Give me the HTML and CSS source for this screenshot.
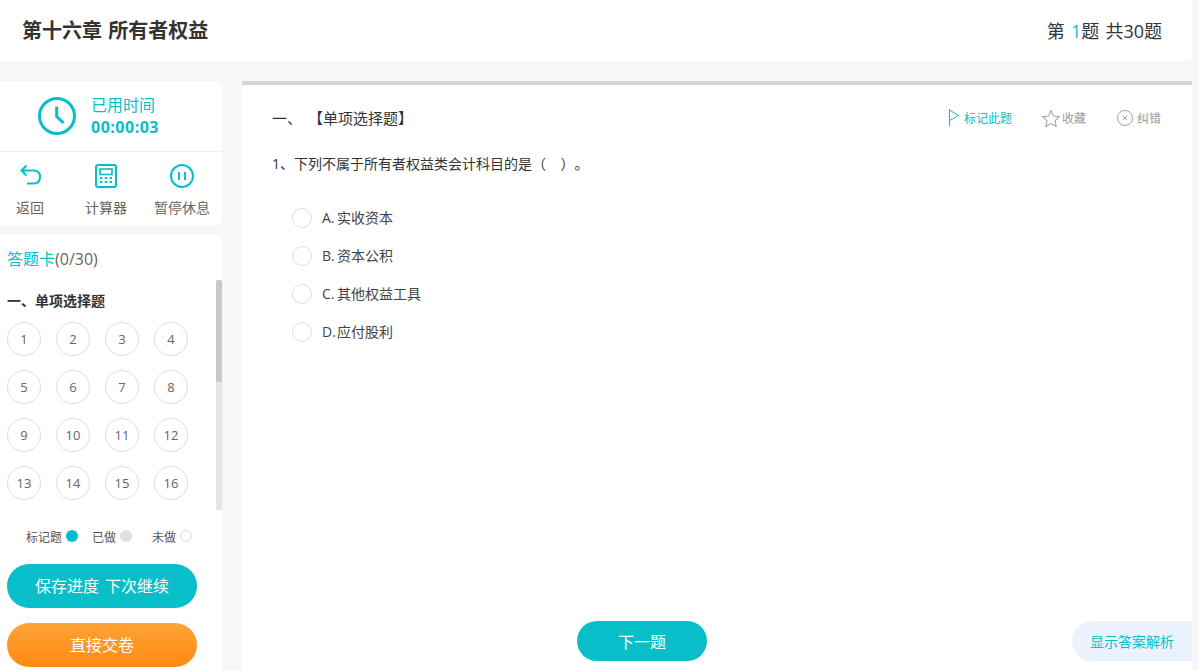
FILE: index.html
```html
<!DOCTYPE html>
<html lang="zh-CN">
<head>
<meta charset="utf-8">
<title>第十六章 所有者权益</title>
<link rel="stylesheet" href="styles.css">
</head>
<body>
<header class="topbar">
  <h1 class="chapter">第十六章 所有者权益</h1>
  <div class="progress">第 <span class="accent">1</span>题 共30题</div>
</header>
<div class="layout">
  <aside class="sidebar">
    <section class="card tools-card">
      <div class="timer">
        <svg class="clock" width="38" height="38" viewBox="0 0 38 38" fill="none"><circle cx="19" cy="19" r="17.5" stroke="#08bfc9" stroke-width="3"/><path d="M18.7 9.5V19.5L25.5 26" stroke="#08bfc9" stroke-width="3"/></svg>
        <div class="timer-text">
          <div class="timer-label">已用时间</div>
          <div class="timer-value">00:00:03</div>
        </div>
      </div>
      <div class="tools">
        <div class="tool tool-back">
          <svg width="24" height="24" viewBox="0 0 24 24" fill="none" stroke="#08bfc9" stroke-width="2"><path d="M7.5 1.5L2.5 6.5L7.5 11.5M2.5 6.5H14.5C18.5 6.5 21 9 21 13C21 17 18.5 19.5 14.5 19.5H8"/></svg>
          <span>返回</span>
        </div>
        <div class="tool tool-calc">
          <svg width="24" height="24" viewBox="0 0 24 24" fill="none"><rect x="2" y="1" width="20" height="22" rx="2" stroke="#08bfc9" stroke-width="2"/><rect x="6" y="5" width="12" height="5.5" stroke="#08bfc9" stroke-width="1.6"/><path d="M6 13h2.400v2H6zM10.800 13h2.400v2h-2.400zM15.600 13H18v2h-2.400zM6 17h2.400v2H6zM10.800 17h2.400v2h-2.400zM15.600 17H18v2h-2.400z" fill="#08bfc9"/></svg>
          <span>计算器</span>
        </div>
        <div class="tool tool-pause">
          <svg width="24" height="24" viewBox="0 0 24 24" fill="none" stroke="#08bfc9" stroke-width="2"><circle cx="12" cy="12" r="11"/><path d="M9 8V16M15 8V16"/></svg>
          <span>暂停休息</span>
        </div>
      </div>
    </section>
    <section class="card sheet">
      <div class="sheet-title"><span class="accent">答题卡</span>(0/30)</div>
      <div class="sheet-scroll">
        <div class="sheet-list">
          <h2 class="sheet-section">一、单项选择题</h2>
          <div class="numbers">
            <span class="num">1</span><span class="num">2</span><span class="num">3</span><span class="num">4</span>
            <span class="num">5</span><span class="num">6</span><span class="num">7</span><span class="num">8</span>
            <span class="num">9</span><span class="num">10</span><span class="num">11</span><span class="num">12</span>
            <span class="num">13</span><span class="num">14</span><span class="num">15</span><span class="num">16</span>
          </div>
        </div>
        <div class="scroll-track"><div class="scroll-thumb"></div></div>
      </div>
      <div class="legend">
        <span class="legend-item legend-mark">标记题<i class="dot dot-mark"></i></span>
        <span class="legend-item legend-done">已做<i class="dot dot-done"></i></span>
        <span class="legend-item">未做<i class="dot dot-todo"></i></span>
      </div>
      <button class="pill pill-save" type="button">保存进度 下次继续</button>
      <button class="pill pill-submit" type="button">直接交卷</button>
    </section>
  </aside>
  <main class="paper">
    <div class="paper-head">
      <div class="q-type">一、 【单项选择题】</div>
      <div class="actions">
        <span class="action action-mark">
          <svg width="11" height="17" viewBox="0 0 11 17" fill="none" stroke="#08bfc9"><path d="M.5 0V17M.5 1L9.500 6.500L.5 11.500"/></svg>标记此题
        </span>
        <span class="action action-fav">
          <svg width="18" height="17" viewBox="0.5 0.5 17 16" fill="none" stroke="#a3a3a3"><path d="M9 1L11.300 6.100L17 6.800L12.800 10.500L13.900 16L9 13.300L4.100 16L5.200 10.500L1 6.800L6.700 6.100Z"/></svg>收藏
        </span>
        <span class="action action-report">
          <svg width="16" height="16" viewBox="0 0 16 16" fill="none" stroke="#a3a3a3"><circle cx="8" cy="8" r="7.500"/><path d="M5.800 5.800L10.200 10.200M10.200 5.800L5.800 10.200"/></svg>纠错
        </span>
      </div>
    </div>
    <p class="stem">1、下列不属于所有者权益类会计科目的是（&nbsp;&nbsp;&nbsp;&nbsp;）。</p>
    <ul class="options">
      <li class="option"><i class="radio"></i><span class="option-text"><span class="option-key">A.</span>实收资本</span></li>
      <li class="option"><i class="radio"></i><span class="option-text"><span class="option-key">B.</span>资本公积</span></li>
      <li class="option"><i class="radio"></i><span class="option-text"><span class="option-key">C.</span>其他权益工具</span></li>
      <li class="option"><i class="radio"></i><span class="option-text"><span class="option-key">D.</span>应付股利</span></li>
    </ul>
    <div class="paper-foot">
      <button class="next" type="button">下一题</button>
      <button class="analysis" type="button">显示答案解析</button>
    </div>
  </main>
</div>
</body>
</html>
```

FILE: styles.css
```css
* { box-sizing: border-box; }
html, body { height: 100%; }
body {
  margin: 0;
  height: 670px;
  overflow: hidden;
  display: flex;
  flex-direction: column;
  padding-right: 6px;
  background: #f7f7f7;
  color: #333;
  font-family: "Open Sans", "Noto Sans CJK SC", sans-serif;
  text-spacing-trim: space-all;
}
.accent { color: #08bfc9; }
.topbar {
  flex: none;
  height: 61px;
  display: flex;
  align-items: center;
  justify-content: space-between;
  padding: 0 30px 0 22px;
  background: #fff;
  border-bottom-right-radius: 4px;
}
.chapter { margin: 0; font-size: 20px; font-weight: 700; line-height: 28px; color: #333; word-spacing: 1px; }
.progress { font-size: 18px; line-height: 26px; color: #333; word-spacing: 1.500px; }
.layout { flex: 1; min-height: 0; display: flex; gap: 20px; margin-top: 20px; }
.sidebar { flex: none; width: 222px; display: flex; flex-direction: column; gap: 10px; }
.card { background: #fff; border-radius: 0 6px 6px 0; }
.tools-card { flex: none; height: 144px; }
.timer {
  height: 71px;
  display: flex;
  align-items: center;
  gap: 15px;
  padding-left: 38px;
  border-bottom: 1px solid #eee;
}
.clock { flex: none; }
.timer-text { color: #08bfc9; font-size: 16px; line-height: 22px; }
.timer-value { font-weight: 700; letter-spacing: 0.500px; }
.tools { display: flex; height: 73px; }
.tool {
  display: flex;
  flex-direction: column;
  align-items: center;
  gap: 10px;
  padding-top: 12px;
  font-size: 14px;
  line-height: 20px;
  color: #666;
}
.tool-back { width: 60px; margin-right: 24px; }
.tool-calc { width: 44px; margin-right: 25px; }
.tool-pause { width: 58px; }
.tool-back svg { margin-left: 2px; }
.sheet {
  flex: 1;
  min-height: 0;
  display: flex;
  flex-direction: column;
  border-radius: 0 6px 0 0;
}
.sheet-title {
  flex: none;
  height: 45px;
  padding: 13px 0 0 7px;
  font-size: 16px;
  line-height: 22px;
  color: #666;
}
.sheet-scroll { position: relative; flex: none; height: 230px; overflow: hidden; }
.sheet-list { padding: 12px 0 0 7px; }
.scroll-track { position: absolute; top: 0; right: 0; bottom: 0; width: 6px; background: #e6e6e6; }
.scroll-thumb { height: 102px; background: #c9c9c9; border-radius: 3px 3px 0 0; }
.sheet-section { margin: 0 0 12px; font-size: 14px; font-weight: 700; line-height: 18px; color: #333; }
.numbers { display: grid; grid-template-columns: repeat(4, 34px); gap: 14px 15px; }
.num {
  height: 34px;
  display: flex;
  align-items: center;
  justify-content: center;
  border: 1px solid #ddd;
  border-radius: 50%;
  font-size: 13px;
  color: #666;
}
.legend {
  flex: none;
  display: flex;
  align-items: center;
  height: 54px;
  padding: 0 0 0 26px;
  font-size: 12px;
  color: #555;
}
.legend-item { display: flex; align-items: center; gap: 4px; }
.legend-mark { margin-right: 14px; }
.legend-done { margin-right: 20px; }
.dot { width: 12px; height: 12px; border-radius: 50%; margin-top: -2px; }
.dot-mark { background: #08bfc9; }
.dot-done { background: #e0e0e0; }
.dot-todo { border: 1px solid #ddd; }
.pill {
  flex: none;
  width: 190px;
  height: 44px;
  margin-left: 7px;
  padding: 0;
  border: 0;
  border-radius: 22px;
  color: #fff;
  font: 16px/22px "Open Sans", "Noto Sans CJK SC", sans-serif;
  word-spacing: 2px;
}
.pill-save { background: #08bfc9; margin-bottom: 15px; }
.pill-submit { background: linear-gradient(#ffa338, #ff8a12); }
.paper {
  flex: 1;
  min-width: 0;
  display: flex;
  flex-direction: column;
  background: #fff;
  border-top: 4px solid #d5d5d5;
  padding-left: 30px;
}
.paper-head {
  display: flex;
  align-items: center;
  justify-content: space-between;
  height: 26px;
  margin-top: 20px;
  padding-right: 31px;
}
.q-type { font-size: 15px; line-height: 22px; color: #333; word-spacing: 2px; }
.actions { display: flex; align-items: center; font-size: 12px; color: #999; }
.action { display: flex; align-items: center; }
.action-mark { color: #08bfc9; margin-right: 30px; gap: 4px; margin-top: -1px; }
.action-fav { margin-right: 31px; gap: 2px; }
.action-report { gap: 4px; }
.stem { margin: 23px 0 0; font-size: 14px; line-height: 20px; color: #333; }
.options {
  list-style: none;
  margin: 34px 0 0;
  padding: 0 0 0 20px;
  display: flex;
  flex-direction: column;
  gap: 18px;
}
.option { display: flex; align-items: center; gap: 10px; height: 20px; font-size: 14px; line-height: 20px; color: #444; }
.option-key { display: inline-block; width: 15px; }
.radio { flex: none; width: 20px; height: 20px; border: 1px solid #ddd; border-radius: 50%; }
.paper-foot {
  margin-top: auto;
  display: flex;
  align-items: center;
  padding: 0 0 9px 305px;
}
.next {
  width: 130px;
  height: 40px;
  padding: 0;
  border: 0;
  border-radius: 20px;
  background: #08bfc9;
  color: #fff;
  font: 16px/22px "Noto Sans CJK SC", sans-serif;
}
.analysis {
  width: 120px;
  height: 40px;
  margin-left: auto;
  padding: 0;
  border: 0;
  border-radius: 20px 0 0 20px;
  background: #eaf3fd;
  color: #08bfc9;
  font: 14px/20px "Noto Sans CJK SC", sans-serif;
}
```
